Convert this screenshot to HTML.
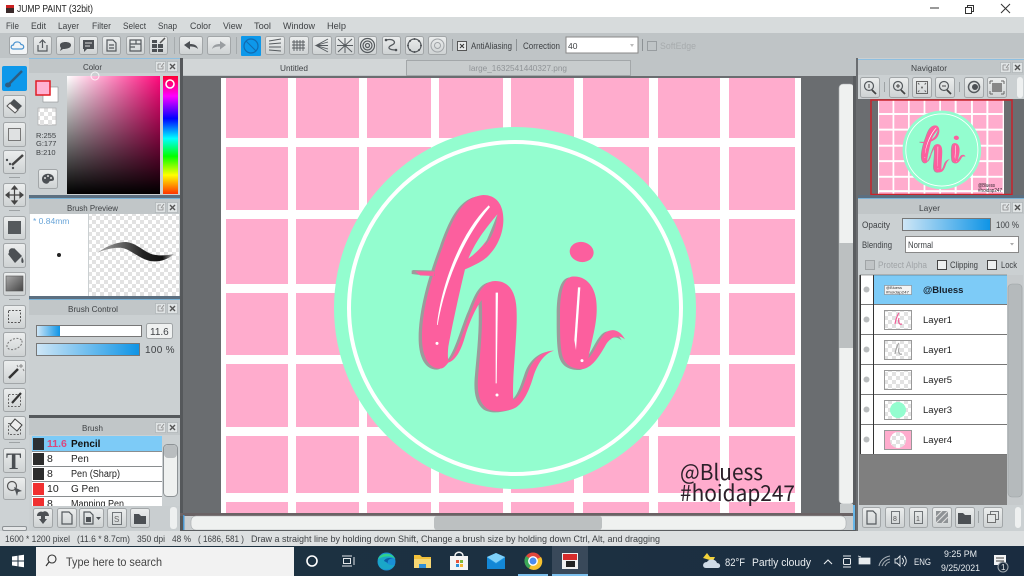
<!DOCTYPE html>
<html><head><meta charset="utf-8"><title>JUMP PAINT</title>
<style>
html,body{margin:0;padding:0;width:1024px;height:576px;overflow:hidden;background:#ccd1d3}
svg{display:block;position:absolute;left:0;top:0}
text{font-family:"Liberation Sans",sans-serif;fill:#3f4245;font-size:9.5px}
.b{fill:url(#bg);stroke:#a2a6a8;stroke-width:1}
.ic{fill:none;stroke:#555a5e;stroke-width:1.2}
.ifl{fill:#4c5054}
.h{fill:#c1c6c8}
.sm{fill:#dfe3e4;stroke:#aab0b2;stroke-width:.6}
.w{fill:#fff}
.tb text{fill:#e8ecef}
.wm{font-family:"Noto Sans CJK JP","Liberation Sans",sans-serif;fill:#2b2029}
</style></head><body>
<svg width="1024" height="576" viewBox="0 0 1024 576" xmlns="http://www.w3.org/2000/svg">
<defs>
<linearGradient id="bg" x1="0" y1="0" x2="0" y2="1"><stop offset="0" stop-color="#eceeee"/><stop offset="1" stop-color="#ced2d3"/></linearGradient>
<linearGradient id="blue" x1="0" y1="0" x2="1" y2="0"><stop offset="0" stop-color="#cfe6f6"/><stop offset="1" stop-color="#0e94e6"/></linearGradient>
<linearGradient id="sv1" x1="0" y1="0" x2="1" y2="0"><stop offset="0" stop-color="#fff"/><stop offset="1" stop-color="#ff0a7c"/></linearGradient>
<linearGradient id="sv2" x1="0" y1="0" x2="0" y2="1"><stop offset="0" stop-color="#000" stop-opacity="0"/><stop offset="1" stop-color="#000"/></linearGradient>
<linearGradient id="hue" x1="0" y1="0" x2="0" y2="1"><stop offset="0" stop-color="#ff0030"/><stop offset=".17" stop-color="#f0f"/><stop offset=".36" stop-color="#00f"/><stop offset=".53" stop-color="#0ff"/><stop offset=".68" stop-color="#0f0"/><stop offset=".84" stop-color="#ff0"/><stop offset="1" stop-color="#f30"/></linearGradient>
<linearGradient id="st" x1="0" y1="0" x2="1" y2="0"><stop offset="0" stop-color="#aaa"/><stop offset=".6" stop-color="#222"/><stop offset=".85" stop-color="#111"/><stop offset="1" stop-color="#bbb"/></linearGradient>
<linearGradient id="gr" x1="0" y1="0" x2="1" y2="1"><stop offset="0" stop-color="#aaa"/><stop offset="1" stop-color="#444"/></linearGradient>
<linearGradient id="task" x1="0" y1="0" x2="1" y2="0"><stop offset="0" stop-color="#1d3241"/><stop offset=".55" stop-color="#1c3041"/><stop offset="1" stop-color="#1a2c40"/></linearGradient>
<pattern id="ck" width="8" height="8" patternUnits="userSpaceOnUse"><rect width="8" height="8" fill="#fff"/><rect width="4" height="4" fill="#e2e2e2"/><rect x="4" y="4" width="4" height="4" fill="#e2e2e2"/></pattern>
<g id="art">
<rect x="221" y="78" width="580" height="435" fill="#ffaccd"/>
<g fill="#fff">
<rect x="221" y="78" width="5" height="435"/><rect x="288" y="78" width="8" height="435"/><rect x="359" y="78" width="8" height="435"/><rect x="431" y="78" width="8" height="435"/><rect x="503" y="78" width="8" height="435"/><rect x="574" y="78" width="9" height="435"/><rect x="649" y="78" width="9" height="435"/><rect x="720" y="78" width="9" height="435"/><rect x="795" y="78" width="6" height="435"/>
<rect x="221" y="138" width="580" height="9"/><rect x="221" y="210" width="580" height="9"/><rect x="221" y="284" width="580" height="9"/><rect x="221" y="355" width="580" height="9"/><rect x="221" y="427" width="580" height="9"/><rect x="221" y="493" width="580" height="9"/>
</g>
<circle cx="515" cy="308" r="181" fill="#93fdcf"/>
<circle cx="515" cy="308" r="166" fill="none" stroke="#fff" stroke-width="4"/>
<g transform="translate(380 180) scale(.33333)">
<path fill="#9b9b9b" transform="translate(-10 3)" d="M180 566C145 565 128 530 126 480C124 400 150 300 190 195C215 125 245 50 310 45C350 45 372 75 370 125C368 170 345 215 310 240C295 250 270 262 255 268C240 330 220 420 205 500C203 520 203 535 206 543C230 525 250 450 270 400C285 370 300 303 345 303C390 303 410 340 410 400C412 470 395 600 400 660C420 650 430 620 445 575C460 535 490 512 522 512C495 520 475 545 460 590C445 640 425 680 395 688C370 695 340 698 320 685C295 665 290 630 295 580C300 520 310 440 305 360C290 380 270 420 255 470C245 505 230 540 205 548C195 560 190 566 180 566Z"/>
<path fill="#fc5f9e" d="M180 566C145 565 128 530 126 480C124 400 150 300 190 195C215 125 245 50 310 45C350 45 372 75 370 125C368 170 345 215 310 240C295 250 270 262 255 268C240 330 220 420 205 500C203 520 203 535 206 543C230 525 250 450 270 400C285 370 300 303 345 303C390 303 410 340 410 400C412 470 395 600 400 660C420 650 430 620 445 575C460 535 490 512 522 512C495 520 475 545 460 590C445 640 425 680 395 688C370 695 340 698 320 685C295 665 290 630 295 580C300 520 310 440 305 360C290 380 270 420 255 470C245 505 230 540 205 548C195 560 190 566 180 566Z"/>
<path fill="#93fdcf" d="M265 236C295 215 345 165 352 103C330 130 290 175 265 236Z"/>
<path fill="#9b9b9b" d="M352 103C350 140 335 175 312 200C325 170 340 135 352 103Z"/>
<path d="M95 272L100 270L165 272L165 288L110 284L95 282Z" fill="#9b9b9b"/>
<path d="M105 274L165 274L163 288L120 286Z" fill="#fc5f9e"/>
<path fill="#9b9b9b" transform="translate(-10 3)" d="M575 290C550 295 540 340 540 400C540 460 540 510 550 535C560 560 585 568 610 567C640 560 660 525 680 490C695 470 715 462 735 478C720 450 695 442 675 460C655 480 645 515 625 535C635 480 652 430 650 380C650 330 625 285 575 290Z"/>
<path fill="#fc5f9e" d="M575 290C550 295 540 340 540 400C540 460 540 510 550 535C560 560 585 568 610 567C640 560 660 525 680 490C695 470 715 462 735 478C720 450 695 442 675 460C655 480 645 515 625 535C635 480 652 430 650 380C650 330 625 285 575 290Z"/>
<ellipse cx="605" cy="216" rx="36" ry="30" transform="rotate(10 605 216)" fill="#fc5f9e"/>
<g fill="#fff"><path d="M171 435C180 340 230 170 326 76L330 81C245 180 192 320 173 435Z"/><path d="M347 338L354 338L350 610L347 610Z"/><path d="M594 322L601 322L588 510L583 480Z"/><circle cx="171" cy="490" r="4.500"/><circle cx="351" cy="645" r="4.500"/><circle cx="606" cy="542" r="4.500"/></g>
</g>
</g>
<clipPath id="tc"><rect x="878" y="100" width="126" height="94"/></clipPath>
</defs>

<rect width="1024" height="576" fill="#ccd1d3"/>
<!-- title bar -->
<rect width="1024" height="17" fill="#fff"/>
<rect x="6" y="6" width="8" height="7" fill="#3a2a2a"/><rect x="6" y="5" width="8" height="3" fill="#c22"/>
<text x="17" y="12" textLength="76" lengthAdjust="spacingAndGlyphs" style="font-size:10px;fill:#222">JUMP PAINT (32bit)</text>
<path d="M930 8H939" stroke="#333"/><rect x="967.500" y="5.500" width="6" height="6" fill="none" stroke="#333"/><rect x="965.500" y="7.500" width="6" height="6" fill="#fff" stroke="#333"/><path d="M1001 4L1010 13M1010 4L1001 13" stroke="#333"/>
<!-- menu -->
<rect y="17" width="1024" height="16" fill="#d7dbdc"/>
<g>
<text x="6" y="29" textLength="13" lengthAdjust="spacingAndGlyphs">File</text><text x="31" y="29" textLength="15" lengthAdjust="spacingAndGlyphs">Edit</text><text x="58" y="29" textLength="21" lengthAdjust="spacingAndGlyphs">Layer</text><text x="92" y="29" textLength="19" lengthAdjust="spacingAndGlyphs">Filter</text><text x="123" y="29" textLength="23" lengthAdjust="spacingAndGlyphs">Select</text><text x="158" y="29" textLength="19" lengthAdjust="spacingAndGlyphs">Snap</text><text x="190" y="29" textLength="21" lengthAdjust="spacingAndGlyphs">Color</text><text x="223" y="29" textLength="19" lengthAdjust="spacingAndGlyphs">View</text><text x="254" y="29" textLength="17" lengthAdjust="spacingAndGlyphs">Tool</text><text x="283" y="29" textLength="32" lengthAdjust="spacingAndGlyphs">Window</text><text x="327" y="29" textLength="19" lengthAdjust="spacingAndGlyphs">Help</text>
</g>
<!-- toolbar -->
<rect y="33" width="1024" height="25" fill="#bfc4c6"/>
<g>
<rect class="b" x="9.500" y="36.500" width="18" height="18" rx="2" style="fill:#f3f5f6"/><path d="M13 49C10.500 49 10.500 45 13.500 45C14 41 20 41 21 44.500C24.500 44.500 24.500 49 21.500 49Z" fill="none" stroke="#4a93cf" stroke-width="1.200"/>
<rect class="b" x="33.500" y="36.500" width="18" height="18" rx="2"/><path d="M38 45V51H47V45M42.500 48V40M39.500 43L42.500 40L45.500 43" class="ic"/>
<rect class="b" x="56.500" y="36.500" width="18" height="18" rx="2"/><path d="M60 45C60 41 71 41 71 45C71 49 64 49 63 49L60 51L61 48C60 47 60 46 60 45Z" class="ifl"/>
<rect class="b" x="79.500" y="36.500" width="18" height="18" rx="2"/><path d="M83 40H94V49H87L84 52V49H83Z" class="ifl"/><path d="M85 43H92M85 46H90" stroke="#ddd"/>
<rect class="b" x="102.500" y="36.500" width="18" height="18" rx="2"/><path d="M107 40H113L116 43V51H107ZM109 45H114M109 48H114" class="ic"/>
<rect class="b" x="126.500" y="36.500" width="18" height="18" rx="2"/><path d="M130 40H141V51H130ZM130 44H141M136 40V44M130 47H135" class="ic"/>
<rect class="b" x="149.500" y="36.500" width="18" height="18" rx="2"/><path d="M152 44H157V48H152ZM158 44H163V48H158ZM152 49H157V52H152ZM158 49H163V52H158ZM152 40H157V43H152Z" class="ifl"/><path d="M160 43L165 38" stroke="#555" stroke-width="1.500"/>
<rect x="174" y="37" width="1" height="17" fill="#a6abad"/>
<rect class="b" x="179.500" y="36.500" width="23" height="18" rx="2"/><path d="M184 45L190 41V44C194 44 197 45 198 49C196 47 193 46.500 190 46.500V49.500Z" class="ifl"/>
<rect class="b" x="207.500" y="36.500" width="23" height="18" rx="2"/><path d="M226 45L220 41V44C216 44 213 45 212 49C214 47 217 46.500 220 46.500V49.500Z" fill="#9a9ea1"/>
<rect x="236" y="37" width="1" height="17" fill="#a6abad"/>
<rect x="241" y="36" width="20" height="20" rx="1" fill="#0d98ea"/><circle cx="251" cy="46" r="7" fill="none" stroke="#136bb0" stroke-width="1.200"/><path d="M246 41L256 51" stroke="#136bb0"/>
<rect class="b" x="265.500" y="36.500" width="19" height="18" rx="2"/><path d="M269 41L281 39M269 44L281 43M269 47L281 47M269 50L281 51" class="ic" style="stroke-width:.9"/>
<rect class="b" x="289.500" y="36.500" width="19" height="18" rx="2"/><path d="M294 40V51M297 40V51M300 40V51M303 40V51M292 42H305M292 45H305M292 48H305" class="ic" style="stroke-width:.9"/>
<rect class="b" x="312.500" y="36.500" width="19" height="18" rx="2"/><path d="M328 39L316 45.500L328 52M328 42L316 45.500L328 49M328 45.500H316" class="ic" style="stroke-width:.9"/>
<rect class="b" x="335.500" y="36.500" width="19" height="18" rx="2"/><path d="M338 39L352 52M352 39L338 52M345 38V53M337 45.500H353" class="ic" style="stroke-width:1"/>
<rect class="b" x="358.500" y="36.500" width="18" height="18" rx="2"/><circle cx="367.500" cy="45.500" r="7" class="ic"/><circle cx="367.500" cy="45.500" r="4.500" class="ic"/><circle cx="367.500" cy="45.500" r="2" class="ic"/>
<rect class="b" x="382.500" y="36.500" width="18" height="18" rx="2"/><path d="M386 40C394 38 397 43 392 45C387 47 388 50 396 50" class="ic" style="stroke-width:1.300"/><circle cx="386" cy="40" r="1.300" class="ifl"/><circle cx="396" cy="50" r="1.300" class="ifl"/>
<rect class="b" x="405.500" y="36.500" width="18" height="18" rx="2"/><circle cx="414.500" cy="45.500" r="6.500" class="ic"/><g class="ifl"><circle cx="414.500" cy="39" r="1"/><circle cx="414.500" cy="52" r="1"/><circle cx="408" cy="45.500" r="1"/><circle cx="421" cy="45.500" r="1"/><circle cx="410" cy="41" r="1"/><circle cx="419" cy="41" r="1"/><circle cx="410" cy="50" r="1"/><circle cx="419" cy="50" r="1"/></g>
<rect class="b" x="428.500" y="36.500" width="18" height="18" rx="2"/><circle cx="437.500" cy="45.500" r="6.500" fill="none" stroke="#a0a4a7"/><circle cx="437.500" cy="45.500" r="3" fill="none" stroke="#a0a4a7"/>
<rect x="452" y="39" width="1" height="12" fill="#8d9295"/>
<rect x="457.500" y="41.500" width="9" height="9" fill="#e8eaea" stroke="#555"/><path d="M460 44L464 48M464 44L460 48" stroke="#333"/>
<text x="471" y="49" textLength="41" lengthAdjust="spacingAndGlyphs" style="font-size:9px">AntiAliasing</text>
<rect x="516" y="39" width="1" height="12" fill="#8d9295"/>
<text x="523" y="49" textLength="37" lengthAdjust="spacingAndGlyphs" style="font-size:9px">Correction</text>
<rect x="566" y="37" width="72" height="16" fill="#fff" stroke="#888"/>
<text x="568" y="49" style="font-size:8.500px">40</text><path d="M630 44L634 44L632 47Z" fill="#bbb"/>
<rect x="642" y="39" width="1" height="12" fill="#8d9295"/>
<rect x="647.500" y="41.500" width="9" height="9" fill="none" stroke="#989da0"/>
<text x="660" y="49" textLength="36" lengthAdjust="spacingAndGlyphs" style="font-size:9px;fill:#a7abad">SoftEdge</text>
</g>

<!-- center tabs -->
<rect x="180" y="58" width="676" height="18" fill="#bfc4c6"/>
<rect x="183" y="59" width="224" height="16" fill="#d2d6d7"/>
<text x="280" y="71" textLength="28" lengthAdjust="spacingAndGlyphs" style="font-size:8.500px">Untitled</text>
<rect x="406.500" y="60.500" width="224" height="15" fill="#c8cccd" stroke="#a3a7a9"/>
<text x="469" y="71" textLength="98" lengthAdjust="spacingAndGlyphs" style="font-size:8.500px;fill:#909497">large_1632541440327.png</text>

<!-- canvas area -->
<rect x="180" y="76" width="676" height="454" fill="#6a6d70"/>
<rect x="180" y="58" width="3" height="472" fill="#55585b"/>
<use href="#art"/>
<text class="wm" x="680" y="480" textLength="83" lengthAdjust="spacingAndGlyphs" style="font-size:22px;font-family:'Noto Sans CJK JP','Liberation Sans',sans-serif;fill:#2b2029">@Bluess</text>
<text class="wm" x="680" y="501" textLength="115" lengthAdjust="spacingAndGlyphs" style="font-size:22px;font-family:'Noto Sans CJK JP','Liberation Sans',sans-serif;fill:#2b2029">#hoidap247</text>
<!-- scrollbars -->
<rect x="839" y="84" width="15" height="420" rx="4" fill="#eff1f0" stroke="#a7abad" stroke-width=".6"/>
<rect x="839" y="243" width="15" height="105" fill="#bcc0c1"/>
<rect x="840" y="504" width="13" height="26" fill="#c6cacb"/>
<rect x="853" y="76" width="3" height="454" fill="#5a5d60"/>
<rect x="853" y="505" width="2" height="25" fill="#66b6e8"/>
<rect x="180" y="513" width="673" height="3" fill="#6a6264"/>
<rect x="183" y="516" width="670" height="14" fill="#c9cdcf"/>
<rect x="191" y="516" width="655" height="14" rx="5" fill="#eff1f0" stroke="#a7abad" stroke-width=".6"/>
<rect x="434" y="516" width="168" height="14" rx="3" fill="#bcc0c1"/>
<rect x="183" y="515" width="1.500" height="15" fill="#4a97d0"/>
<rect x="180" y="530" width="676" height="1" fill="#5a5d60"/>

<!-- left tools column -->
<rect x="0" y="58" width="29" height="473" fill="#cdd2d4"/>
<rect x="2" y="66" width="25" height="25" rx="2" fill="#0d98ea"/><path d="M8 85L22 71" stroke="#2d5d82" stroke-width="2.500"/><ellipse cx="8" cy="85" rx="3" ry="2.500" fill="#2d5d82"/>
<rect class="b" x="3.500" y="95.500" width="22" height="22" rx="2"/><path d="M14 99L22 106L15 113L7 106Z" class="ifl"/><path d="M7 106L15 113L18 110L10 103Z" fill="#f2f2f2" stroke="#555"/>
<rect class="b" x="3.500" y="122.500" width="22" height="24" rx="2"/><rect x="8.500" y="128.500" width="12" height="12" fill="#dfe1e2" stroke="#777"/>
<rect class="b" x="3.500" y="150.500" width="22" height="23" rx="2"/><path d="M12 165L23 155" stroke="#444" stroke-width="2.500"/><g class="ifl"><circle cx="7" cy="160" r="1.200"/><circle cx="10" cy="164" r="1.200"/><circle cx="13" cy="168" r="1.200"/></g>
<rect x="9" y="177" width="11" height="1" fill="#9ea3a5"/>
<rect class="b" x="3.500" y="183.500" width="22" height="23" rx="2"/><path d="M14.500 186V204M6 195H23M14.500 186L12 189H17ZM14.500 204L12 201H17ZM6 195L9 192.500V197.500ZM23 195L20 192.500V197.500Z" fill="#444" stroke="#444" stroke-width="1.200"/>
<rect x="9" y="210" width="11" height="1" fill="#9ea3a5"/>
<rect class="b" x="3.500" y="216.500" width="22" height="23" rx="2"/><rect x="8" y="221" width="13" height="13" fill="#55595c"/>
<rect class="b" x="3.500" y="243.500" width="22" height="24" rx="2"/><path d="M8 254L14 248L22 256L15 263Z" class="ifl"/><path d="M9 253C8 249 12 247 14 249M22 257C24 260 24 263 22.500 263C21 263 21 260 22 257Z" class="ifl"/>
<rect class="b" x="3.500" y="272.500" width="22" height="23" rx="2"/><rect x="6" y="276" width="17" height="15" fill="url(#gr)" stroke="#555" stroke-width=".6"/>
<rect x="9" y="299" width="11" height="1" fill="#9ea3a5"/>
<rect class="b" x="3.500" y="305.500" width="22" height="23" rx="2"/><rect x="8.500" y="310.500" width="12" height="12" fill="none" stroke="#555" stroke-dasharray="2 1.500"/>
<rect class="b" x="3.500" y="332.500" width="22" height="24" rx="2"/><ellipse cx="14.500" cy="344" rx="8" ry="5" transform="rotate(-25 14.500 344)" fill="none" stroke="#777" stroke-dasharray="2 1.500"/>
<rect class="b" x="3.500" y="360.500" width="22" height="23" rx="2"/><path d="M9 378L18 369" stroke="#333" stroke-width="2.500"/><path d="M21 364V368M19 366H23M17 365L18 367M23 369L24 371" stroke="#888"/>
<rect class="b" x="3.500" y="388.500" width="22" height="23" rx="2"/><rect x="8.500" y="394.500" width="12" height="12" fill="none" stroke="#666" stroke-dasharray="2 1.500"/><path d="M12 403L21 393" stroke="#333" stroke-width="2.200"/>
<rect class="b" x="3.500" y="416.500" width="22" height="23" rx="2"/><rect x="8.500" y="423.500" width="12" height="11" fill="none" stroke="#666" stroke-dasharray="2 1.500"/><path d="M15 419L22 425L17 431L10 425Z" fill="#eee" stroke="#444"/>
<rect x="9" y="442" width="11" height="1" fill="#9ea3a5"/>
<rect class="b" x="3.500" y="448.500" width="22" height="24" rx="2"/><text x="6" y="469" style="font-family:'Liberation Serif',serif;font-size:23px;font-weight:bold;fill:#4a4e52">T</text>
<rect class="b" x="3.500" y="477.500" width="22" height="22" rx="2"/><circle cx="12" cy="486" r="4.500" fill="none" stroke="#555" stroke-width="1.200"/><path d="M14 487L22 491L18 492L17 496Z" class="ifl"/>
<rect x="2.500" y="526.500" width="24" height="4" rx="1.500" fill="#e5e7e8" stroke="#8d9295"/>

<!-- Color panel -->
<rect x="29" y="58" width="151" height="473" fill="#cbd0d2"/>
<rect x="29" y="58" width="151" height="15" class="h"/><rect x="29" y="58" width="151" height="1" fill="#8ebfe0"/>
<text x="83" y="70" textLength="19" lengthAdjust="spacingAndGlyphs" style="font-size:8.500px">Color</text>
<g id="pb"><rect class="sm" x="155.500" y="61.500" width="10" height="10"/><path d="M158 64H161M158 64V69H163V66M161 67L164 63" stroke="#888" fill="none" stroke-width=".8"/><rect class="sm" x="167.500" y="61.500" width="10" height="10"/><path d="M170 64L175 69M175 64L170 69" stroke="#555" stroke-width="1.400"/></g>
<rect x="43" y="87" width="15" height="15" fill="#fff" stroke="#8a8e90" stroke-width=".6"/>
<rect x="36" y="81" width="14" height="14" fill="#ffb1d2" stroke="#e01c24" stroke-width="1.500"/>
<rect x="38" y="108" width="18" height="17" fill="url(#ck)" stroke="#aaa" stroke-width=".6"/>
<text x="36" y="138" style="font-size:7.500px">R:255</text><text x="36" y="146" style="font-size:7.500px">G:177</text><text x="36" y="155" style="font-size:7.500px">B:210</text>
<rect class="b" x="38.500" y="169.500" width="19" height="19" rx="2"/><path d="M42 179C42 172 54 172 54 179C54 182 50 180 49 182C48 185 42 184 42 179Z" class="ifl"/><g fill="#ddd"><circle cx="45" cy="178" r="1"/><circle cx="48" cy="176" r="1"/><circle cx="51" cy="178" r="1"/></g>
<rect x="67" y="76" width="93" height="118" fill="url(#sv1)"/><rect x="67" y="76" width="93" height="118" fill="url(#sv2)"/>
<circle cx="95" cy="76" r="4" fill="none" stroke="#fff" stroke-opacity=".8"/>
<rect x="163" y="76" width="15" height="118" fill="url(#hue)"/>
<circle cx="170" cy="84" r="4" fill="none" stroke="#fff" stroke-width="1.600"/>
<rect x="29" y="195" width="151" height="3" fill="#5c6f80"/><rect x="29" y="198" width="151" height="1" fill="#7ab3d8"/>

<!-- Brush preview -->
<rect x="29" y="199" width="151" height="15" class="h"/>
<text x="67" y="211" textLength="51" lengthAdjust="spacingAndGlyphs" style="font-size:8.500px">Brush Preview</text>
<use href="#pb" transform="translate(0 141)"/>
<rect x="30" y="214" width="58" height="82" fill="#fff"/><rect x="89" y="214" width="90" height="82" fill="url(#ck)"/>
<text x="33" y="224" style="font-size:8.500px;fill:#6aa5d8">* 0.84mm</text>
<circle cx="59" cy="255" r="2" fill="#222"/>
<path d="M97 253C108 245 118 242 126 242C138 243 145 254 156 255C163 256 168 255 174 254C166 261 158 262 150 261C138 258 130 249 122 248C113 247 104 250 97 253Z" fill="url(#st)"/>
<rect x="29" y="296" width="151" height="3" fill="#5c6f80"/><rect x="29" y="299" width="151" height="1" fill="#7ab3d8"/>

<!-- Brush control -->
<rect x="29" y="300" width="151" height="15" class="h"/>
<text x="68" y="312" textLength="50" lengthAdjust="spacingAndGlyphs" style="font-size:8.500px">Brush Control</text>
<use href="#pb" transform="translate(0 242)"/>
<rect x="36.500" y="325.500" width="105" height="11" fill="#fff" stroke="#777"/><rect x="37" y="326" width="23" height="10" fill="url(#blue)"/>
<rect x="146.500" y="323.500" width="26" height="15" rx="2" fill="#eff1f1" stroke="#a0a4a6"/><text x="150" y="335" style="font-size:10px">11.6</text>
<rect x="36.500" y="343.500" width="103" height="12" fill="url(#blue)" stroke="#777"/>
<text x="145" y="353" style="font-size:10px;letter-spacing:.3px">100 %</text>
<rect x="29" y="415" width="151" height="3" fill="#55595c"/>

<!-- Brush -->
<rect x="29" y="418" width="151" height="17" class="h"/>
<text x="82" y="431" textLength="21" lengthAdjust="spacingAndGlyphs" style="font-size:8.500px">Brush</text>
<use href="#pb" transform="translate(0 361)"/>
<rect x="32" y="436" width="130" height="70" fill="#fff"/>
<rect x="32" y="436" width="130" height="15" fill="#7dcbf7"/>
<path d="M32 451.500H162M32 466.500H162M32 481.500H162M32 496.500H162" stroke="#8a8e90"/>
<rect x="33" y="438" width="11" height="12" fill="#2c3034"/><rect x="33" y="453" width="11" height="12" fill="#2c2c2c"/><rect x="33" y="468" width="11" height="12" fill="#2c2c2c"/><rect x="33" y="483" width="11" height="12" fill="#f03030"/><rect x="33" y="498" width="11" height="8" fill="#f03030"/>
<text x="47" y="447" style="font-size:10.500px;font-weight:bold;fill:#d8487e">11.6</text><text x="71" y="447" style="font-size:10px;font-weight:bold;fill:#111">Pencil</text>
<text x="47" y="462" style="font-size:10.500px;fill:#222">8</text><text x="71" y="462" style="font-size:10px;fill:#222">Pen</text>
<text x="47" y="477" style="font-size:10.500px;fill:#222">8</text><text x="71" y="477" textLength="49" lengthAdjust="spacingAndGlyphs" style="font-size:10px;fill:#222">Pen (Sharp)</text>
<text x="47" y="492" style="font-size:10.500px;fill:#222">10</text><text x="71" y="492" style="font-size:10px;fill:#222">G Pen</text>
<text x="47" y="507" style="font-size:10.500px;fill:#222">8</text><text x="71" y="507" textLength="53" lengthAdjust="spacingAndGlyphs" style="font-size:10px;fill:#222">Mapping Pen</text>
<rect x="32" y="506" width="148" height="25" fill="#c9ced0"/>
<rect x="163.500" y="444.500" width="14" height="52" rx="4" fill="#eff1f0" stroke="#8d9295"/><rect x="164" y="445" width="13" height="13" rx="4" fill="#b9bdbf"/>
<rect class="b" x="33.500" y="508.500" width="19" height="19" rx="2"/><path d="M37 516C37 512 41 511 43 512C45 510 49 512 49 516H45V519H47L43 524L39 519H41V516Z" class="ifl"/>
<rect class="b" x="57.500" y="508.500" width="19" height="19" rx="2"/><path d="M62 512H69L72 515V524H62Z" class="ic"/>
<rect class="b" x="79.500" y="508.500" width="24" height="19" rx="2"/><path d="M84 512H90L93 515V524H84Z" class="ic"/><rect x="86" y="517" width="5" height="5" class="ifl"/><path d="M96 517H101L98.500 520Z" class="ifl"/>
<rect class="b" x="107.500" y="508.500" width="19" height="19" rx="2"/><rect x="112.500" y="512.500" width="9" height="12" class="ic" style="stroke-width:.8"/><text x="114" y="522" style="font-size:8px;fill:#666">S</text>
<rect class="b" x="130.500" y="508.500" width="19" height="19" rx="2"/><path d="M134 514H139L141 516H146V524H134Z" class="ifl"/>
<rect x="170" y="507" width="7" height="22" rx="3" fill="#eef0f0"/>

<!-- Right side -->
<rect x="856" y="58" width="168" height="473" fill="#cbd0d2"/>
<rect x="856" y="58" width="2" height="473" fill="#6a6d70"/>
<rect x="858" y="59" width="166" height="16" class="h"/><rect x="858" y="59" width="166" height="1" fill="#8ebfe0"/>
<text x="911" y="71" textLength="36" lengthAdjust="spacingAndGlyphs" style="font-size:8.500px">Navigator</text>
<use href="#pb" transform="translate(845 1)"/>
<g>
<rect class="b" x="860.500" y="77.500" width="19" height="20" rx="2"/><circle cx="869" cy="86" r="4.500" class="ic"/><path d="M872 90L876 94" stroke="#444" stroke-width="1.800"/><path d="M869 84V88" stroke="#444"/>
<rect x="884" y="82" width="1" height="10" fill="#9ea3a5"/>
<rect class="b" x="889.500" y="77.500" width="19" height="20" rx="2"/><circle cx="898" cy="86" r="4.500" class="ic"/><path d="M901 90L905 94" stroke="#444" stroke-width="1.800"/><path d="M896 86H900M898 84V88" stroke="#444"/>
<rect class="b" x="912.500" y="77.500" width="19" height="20" rx="2"/><rect x="916.500" y="81.500" width="11" height="12" fill="none" stroke="#666"/><path d="M918 83L926 92M926 83L918 92" stroke="#666" stroke-dasharray="2 3"/>
<rect class="b" x="935.500" y="77.500" width="19" height="20" rx="2"/><circle cx="944" cy="86" r="4.500" class="ic"/><path d="M947 90L951 94" stroke="#444" stroke-width="1.800"/><path d="M942 86H946" stroke="#444"/>
<rect x="959" y="82" width="1" height="10" fill="#9ea3a5"/>
<rect class="b" x="964.500" y="77.500" width="19" height="20" rx="2"/><circle cx="974" cy="87" r="5.500" class="ic" style="stroke-width:1.500"/><circle cx="975" cy="87" r="3" class="ifl"/>
<rect class="b" x="987.500" y="77.500" width="19" height="20" rx="2"/><rect x="992" y="83" width="10" height="9" fill="#888"/><path d="M990 81H993M990 81V84M1004 81H1001M1004 81V84M990 94H993M990 94V91M1004 94H1001M1004 94V91" stroke="#666"/>
<rect x="1017" y="77" width="6" height="21" rx="3" fill="#eef0f0"/>
</g>
<rect x="858" y="99" width="166" height="96" fill="#6a6d70"/>
<g clip-path="url(#tc)"><use href="#art" transform="translate(878 100) scale(.2172) translate(-221 -78)"/>
<text x="978" y="187" textLength="17" lengthAdjust="spacingAndGlyphs" style="font-size:5px;fill:#2b2029">@Bluess</text><text x="978" y="192" textLength="24" lengthAdjust="spacingAndGlyphs" style="font-size:5px;fill:#2b2029">#hoidap247</text></g>
<rect x="871" y="100" width="141" height="94.500" fill="none" stroke="#c8232b" stroke-width="1.500"/>
<rect x="858" y="195" width="166" height="3" fill="#5c6f80"/><rect x="858" y="198" width="166" height="1" fill="#7ab3d8"/>
<rect x="858" y="199" width="166" height="15" class="h"/>
<text x="919" y="211" textLength="21" lengthAdjust="spacingAndGlyphs" style="font-size:8.500px">Layer</text>
<use href="#pb" transform="translate(845 141)"/>
<text x="862" y="228" textLength="28" lengthAdjust="spacingAndGlyphs" style="font-size:9px">Opacity</text>
<rect x="902.500" y="218.500" width="88" height="12" fill="url(#blue)" stroke="#777"/>
<text x="996" y="228" textLength="23" lengthAdjust="spacingAndGlyphs" style="font-size:9.500px">100 %</text>
<text x="862" y="248" textLength="30" lengthAdjust="spacingAndGlyphs" style="font-size:9px">Blending</text>
<rect x="905.500" y="236.500" width="113" height="16" fill="#fff" stroke="#888"/>
<text x="908" y="248" textLength="25" lengthAdjust="spacingAndGlyphs" style="font-size:9px">Normal</text><path d="M1010 243L1014 243L1012 245.500Z" fill="#aaa"/>
<rect x="865.500" y="260.500" width="9" height="9" fill="#c0c4c6" stroke="#a0a4a6"/>
<text x="878" y="268" textLength="49" lengthAdjust="spacingAndGlyphs" style="font-size:9px;fill:#a0a4a7">Protect Alpha</text>
<rect x="937.500" y="260.500" width="9" height="9" fill="#eef0f0" stroke="#444"/>
<text x="950" y="268" textLength="28" lengthAdjust="spacingAndGlyphs" style="font-size:9px">Clipping</text>
<rect x="987.500" y="260.500" width="9" height="9" fill="#eef0f0" stroke="#444"/>
<text x="1001" y="268" textLength="16" lengthAdjust="spacingAndGlyphs" style="font-size:9px">Lock</text>
<!-- layers -->
<rect x="859" y="275" width="148" height="230" fill="#7f7f7f"/>
<rect x="860" y="275" width="147" height="179" fill="#fff"/>
<rect x="874" y="275" width="133" height="29" fill="#7dcbf7"/>
<path d="M860 304.500H1007M860 334.500H1007M860 364.500H1007M860 394.500H1007M860 424.500H1007M860 454.500H1007" stroke="#777"/>
<path d="M873.500 275V454M860.500 275V454" stroke="#333"/>
<path d="M860 275H1007" stroke="#555" stroke-width=".6"/>
<g fill="#b9bcbd"><circle cx="866.500" cy="289.500" r="3"/><circle cx="866.500" cy="319.500" r="3"/><circle cx="866.500" cy="349.500" r="3"/><circle cx="866.500" cy="379.500" r="3"/><circle cx="866.500" cy="409.500" r="3"/><circle cx="866.500" cy="439.500" r="3"/></g>
<rect x="884.500" y="285.500" width="27" height="9" fill="#f4f4f4" stroke="#888" stroke-width=".6"/>
<text x="886" y="289" textLength="16" lengthAdjust="spacingAndGlyphs" style="font-size:4px;fill:#333">@Bluess</text><text x="886" y="293.500" textLength="23" lengthAdjust="spacingAndGlyphs" style="font-size:4px;fill:#333">#hoidap247</text>
<rect x="884.500" y="310.500" width="27" height="19" fill="url(#ck)" stroke="#999"/><path d="M895 324C896 318 898 314 899 313M899 318C898 322 899 325 902 324" stroke="#ee5f97" fill="none" stroke-width="1.200"/>
<rect x="884.500" y="340.500" width="27" height="19" fill="url(#ck)" stroke="#999"/><path d="M895 354C896 348 898 344 899 343M899 348C898 352 899 355 902 354" stroke="#a5a5a5" fill="none" stroke-width="1.200"/>
<rect x="884.500" y="370.500" width="27" height="19" fill="url(#ck)" stroke="#999"/>
<rect x="884.500" y="400.500" width="27" height="19" fill="url(#ck)" stroke="#999"/><circle cx="898" cy="410" r="8" fill="#93fdcf"/>
<rect x="884.500" y="430.500" width="27" height="19" fill="#ffaccd" stroke="#999"/><circle cx="898" cy="440" r="8" fill="url(#ck)"/>
<text x="923" y="293" style="font-size:9.500px;font-weight:bold;fill:#16202c">@Bluess</text>
<text x="923" y="323" style="font-size:9.500px;fill:#222">Layer1</text><text x="923" y="353" style="font-size:9.500px;fill:#222">Layer1</text><text x="923" y="383" style="font-size:9.500px;fill:#222">Layer5</text><text x="923" y="413" style="font-size:9.500px;fill:#222">Layer3</text><text x="923" y="443" style="font-size:9.500px;fill:#222">Layer4</text>
<rect x="1007" y="275" width="16" height="230" fill="#c6cacc"/>
<rect x="1008" y="284" width="14" height="213" rx="4" fill="#b5babc" stroke="#9ca1a3" stroke-width=".6"/>
<rect x="858" y="505" width="166" height="26" fill="#cbd0d2"/>
<g>
<rect class="b" x="862.500" y="507.500" width="18" height="20" rx="2"/><path d="M867 511H873L876 514V524H867Z" class="ic"/>
<rect class="b" x="885.500" y="507.500" width="19" height="20" rx="2"/><rect x="891.500" y="511.500" width="8" height="12" class="ic" style="stroke-width:.8"/><text x="893" y="521" style="font-size:7px;fill:#555">8</text>
<rect class="b" x="909.500" y="507.500" width="18" height="20" rx="2"/><rect x="914.500" y="511.500" width="8" height="12" class="ic" style="stroke-width:.8"/><text x="916" y="521" style="font-size:7px;fill:#555">1</text>
<rect class="b" x="932.500" y="507.500" width="19" height="20" rx="2"/><rect x="936" y="511" width="12" height="12" fill="#8e9295"/><path d="M936 517L942 511M936 523L948 511M942 523L948 517" stroke="#ddd" stroke-width="1.200"/>
<rect class="b" x="955.500" y="507.500" width="19" height="20" rx="2"/><path d="M958 513H963L965 515H971V524H958Z" class="ifl"/>
<rect x="978" y="511" width="1" height="12" fill="#9ea3a5"/>
<rect class="b" x="983.500" y="507.500" width="19" height="20" rx="2"/><rect x="990.500" y="511.500" width="8" height="8" class="ic" style="stroke-width:.8"/><rect x="987.500" y="514.500" width="8" height="8" fill="#e2e5e5" stroke="#555" stroke-width=".8"/>
<rect x="1015" y="507" width="6" height="21" rx="3" fill="#eef0f0"/>
</g>

<!-- status -->
<rect y="531" width="1024" height="15" fill="#dde0e1"/>
<g>
<text x="5" y="542" textLength="65" lengthAdjust="spacingAndGlyphs">1600 * 1200 pixel</text>
<text x="77" y="542" textLength="53" lengthAdjust="spacingAndGlyphs">(11.6 * 8.7cm)</text>
<text x="137" y="542" textLength="28" lengthAdjust="spacingAndGlyphs">350 dpi</text>
<text x="172" y="542" textLength="19" lengthAdjust="spacingAndGlyphs">48 %</text>
<text x="198" y="542" textLength="46" lengthAdjust="spacingAndGlyphs">( 1686, 581 )</text>
<text x="251" y="542" textLength="409" lengthAdjust="spacingAndGlyphs">Draw a straight line by holding down Shift, Change a brush size by holding down Ctrl, Alt, and dragging</text>
</g>

<!-- taskbar -->
<rect y="546" width="1024" height="30" fill="url(#task)"/>
<path d="M12 556.500L17.500 555.700V560.500H12ZM18.500 555.500L24 554.700V560.500H18.500ZM12 561.500H17.500V566.300L12 565.500ZM18.500 561.500H24V567.300L18.500 566.500Z" fill="#fff"/>
<rect x="36" y="547" width="258" height="29" fill="#f2f2f2"/>
<circle cx="52" cy="559" r="4" fill="none" stroke="#333" stroke-width="1.100"/><path d="M49 562L46 566" stroke="#333" stroke-width="1.200"/>
<text x="66" y="566" textLength="96" lengthAdjust="spacingAndGlyphs" style="font-size:12px;fill:#444">Type here to search</text>
<circle cx="312" cy="561" r="5" fill="none" stroke="#fff" stroke-width="1.600"/>
<path d="M342 556H352M342 566H352M343.500 558.500H350.500V563.500H343.500ZM354 557V565" stroke="#e4e8ea" fill="none"/>
<circle cx="386.500" cy="561.500" r="9" fill="#1a8fd6"/><path d="M378 559C380 553 391 551 395.500 559C393 556.500 387 557 386 560C385.500 563 389 566 395 565C391 570.500 382 571 379 566C378 564 378 561 378 559Z" fill="#1aa6c8"/><path d="M378 559C380 553 391 551 395.500 559C391 555 383 556 378 559Z" fill="#2fd18d"/><path d="M384 561C385 558 390 557 393 559C390 558 387 560 388 563Z" fill="#0b5fa8"/>
<path d="M414 555H420L422 557H431V568H414Z" fill="#f2c13a"/><rect x="414" y="559" width="17" height="9" fill="#f7d774"/><rect x="419" y="564" width="7" height="4" fill="#2f8fd8"/>
<path d="M450 556H468V570H450Z" fill="#f5f5f5"/><path d="M455 556C455 551 463 551 463 556" fill="none" stroke="#f5f5f5" stroke-width="1.400"/><rect x="456" y="560" width="3" height="3" fill="#e8533a"/><rect x="460" y="560" width="3" height="3" fill="#7eba3a"/><rect x="456" y="564" width="3" height="3" fill="#2f8fd8"/><rect x="460" y="564" width="3" height="3" fill="#f5b731"/>
<path d="M487 557L496 553L505 557V569H487Z" fill="#1b93e0"/><path d="M487 557L496 553L505 557L496 563Z" fill="#7fd0f8"/><path d="M487 558L496 564L505 558V569H487Z" fill="#1387d6"/>
<circle cx="533" cy="561" r="8.500" fill="#e0463a"/><path d="M533 561L541 557A8.500 8.500 0 0 1 529 568.500Z" fill="#f6c230"/><path d="M533 561L529 568.500A8.500 8.500 0 0 1 526 556Z" fill="#3aa757"/><circle cx="533" cy="561" r="4.200" fill="#4b8cf0" stroke="#fff" stroke-width="1.400"/>
<rect x="518" y="574" width="30" height="2" fill="#7cc0ee"/>
<rect x="552" y="546" width="36" height="30" fill="#39495a"/><rect x="552" y="574" width="36" height="2" fill="#7cc0ee"/>
<rect x="562" y="553" width="16" height="16" fill="#f0f0f0"/><rect x="563" y="554" width="14" height="6" fill="#d72c2c"/><rect x="566" y="561" width="9" height="6" fill="#222"/>
<path d="M703 558L707 553L710 557L715 557L713 561Z" fill="#f3d23a"/><path d="M706 568C702 568 702 562 707 562C709 558 716 559 717 563C721 563 721 568 718 568Z" fill="#d0dbe6"/>
<g class="tb">
<text x="725" y="566" textLength="20" lengthAdjust="spacingAndGlyphs" style="font-size:11px">82°F</text>
<text x="752" y="566" textLength="59" lengthAdjust="spacingAndGlyphs" style="font-size:11px">Partly cloudy</text>
<text x="914" y="565" textLength="17" lengthAdjust="spacingAndGlyphs" style="font-size:9.500px">ENG</text>
<text x="944" y="557" textLength="33" lengthAdjust="spacingAndGlyphs" style="font-size:9.500px">9:25 PM</text>
<text x="941" y="571" textLength="39" lengthAdjust="spacingAndGlyphs" style="font-size:9.500px">9/25/2021</text>
</g>
<path d="M824 564L828 560L832 564" stroke="#e8ecef" fill="none" stroke-width="1.100"/>
<rect x="843.500" y="558.500" width="7" height="6" rx="1" fill="none" stroke="#e8ecef"/><path d="M843 556H851M843 567H851" stroke="#e8ecef"/>
<path d="M859 558H870V564H859ZM861 557L858 556" fill="#e8ecef" stroke="#e8ecef" stroke-width=".8"/>
<path d="M879 566C880 561 884 557 890 556M882 566C883 563 885 560 890 559M885 566C886 564 888 562 890 562" stroke="#a9b1b8" fill="none"/>
<path d="M895 559H897L900 556V566L897 563H895ZM902 558C904 560 904 562 902 564M904 556C907 559 907 563 904 566" stroke="#e8ecef" fill="none" stroke-width=".9"/>
<path d="M994 555H1006V565H994Z" fill="#f2f4f5"/><path d="M996 558H1004M996 561H1004" stroke="#444"/>
<circle cx="1003" cy="567" r="5" fill="#1c2c3d" stroke="#9fa8af"/><text x="1001" y="570" style="font-size:8px;fill:#e8ecef">1</text>
</svg>
</body></html>
